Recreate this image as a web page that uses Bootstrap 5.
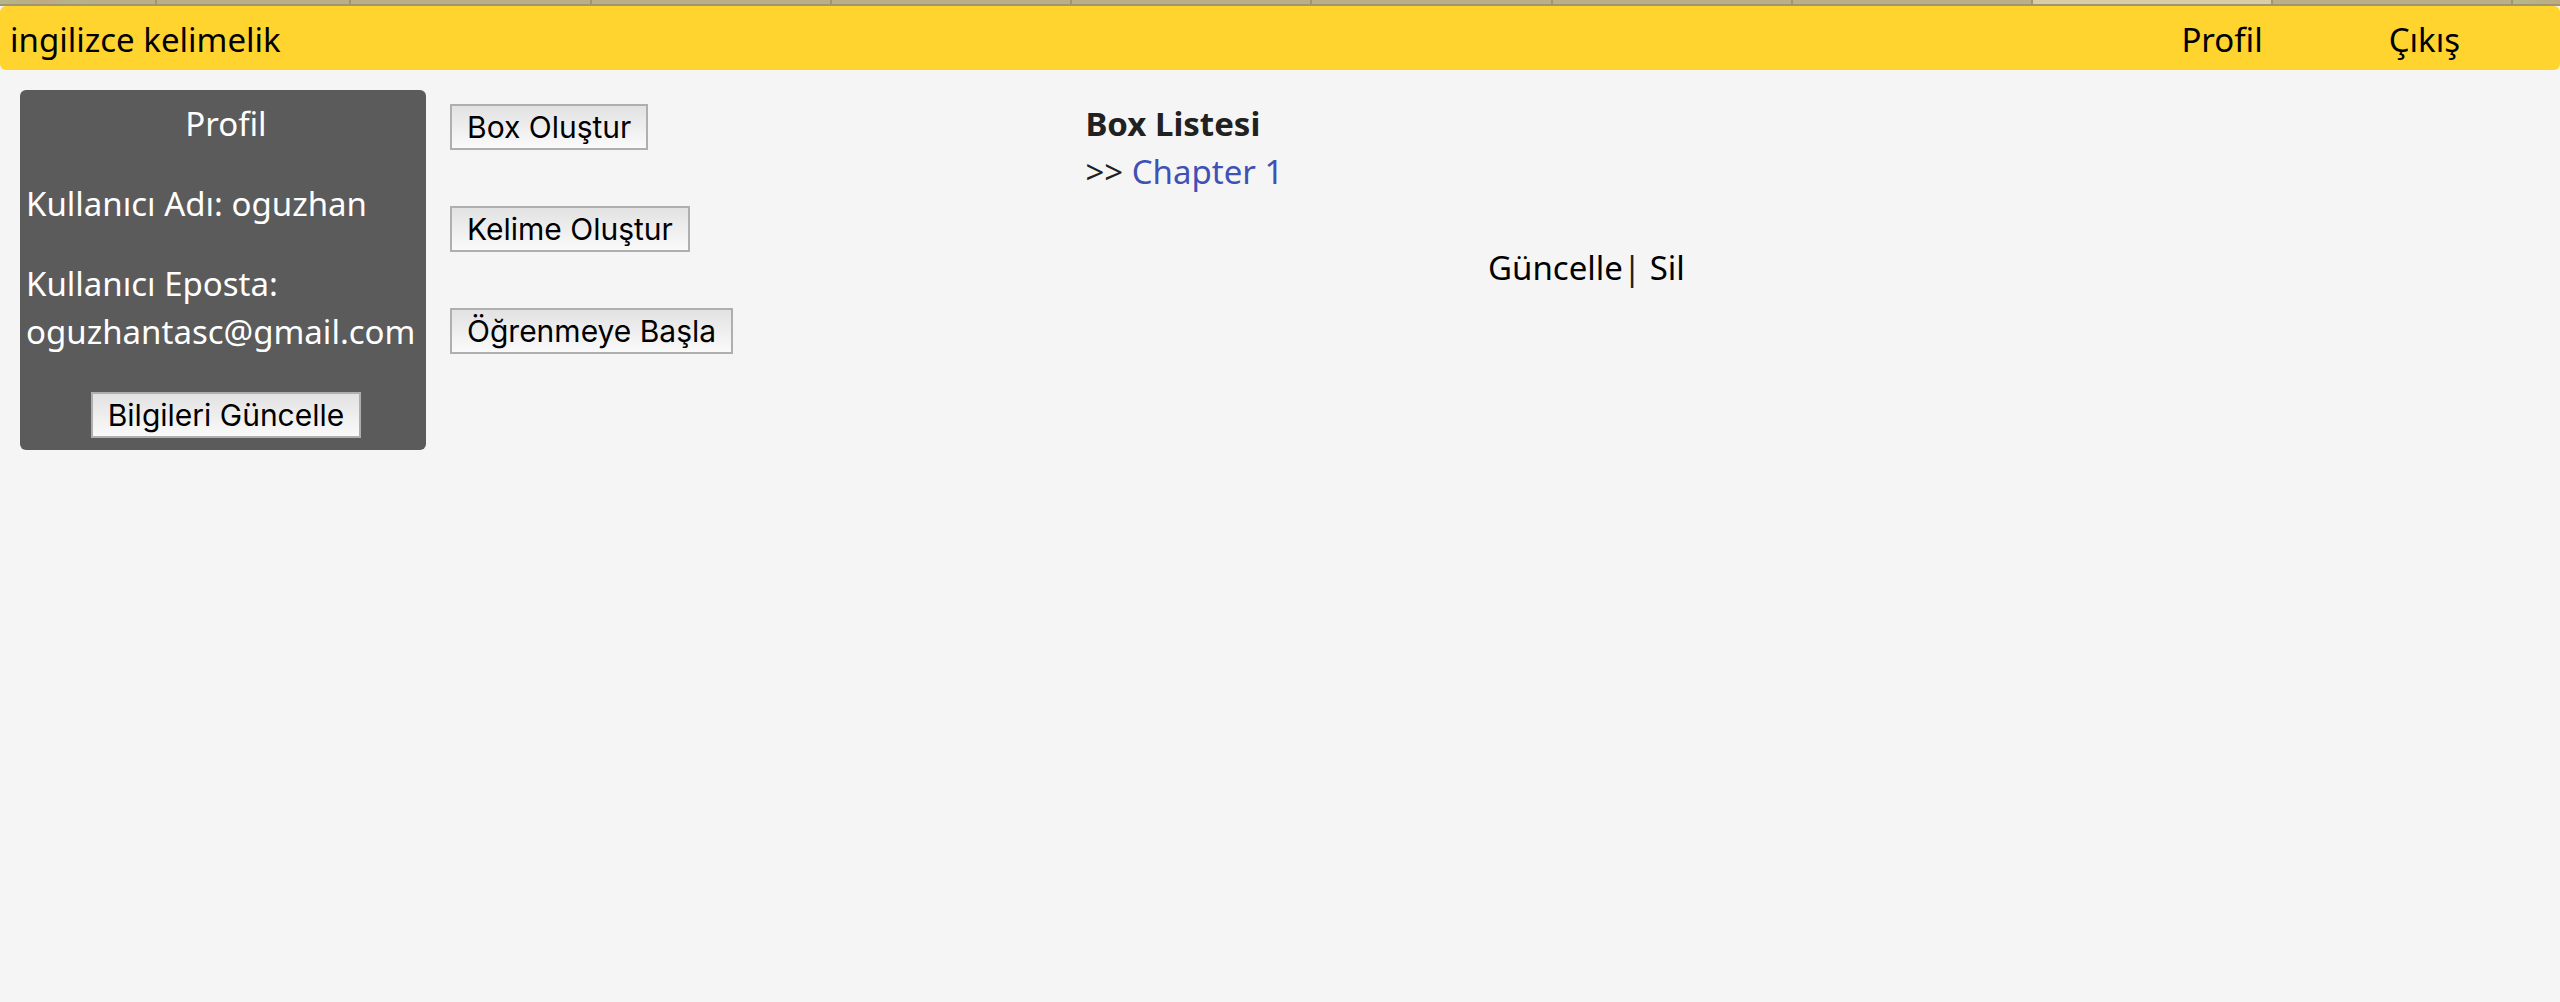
<!DOCTYPE html>
<html lang="tr">
<head>
<meta charset="utf-8">
<meta name="viewport" content="width=device-width, initial-scale=1">
<title>ingilizce kelimelik</title>
<link rel="stylesheet" href="https://cdn.jsdelivr.net/npm/bootstrap@5.3.0/dist/css/bootstrap.min.css">
<style>
body{background:#f5f5f5;color:#212121;font-family:"Noto Sans",sans-serif;font-size:33px;line-height:48px}
.tab-strip{height:6px;background:#bbae88;border-bottom:2px solid #a2946b}
.tab-strip span{flex:240 1 0;border-right:2px solid #a2946b}
.tab-strip .tab-first{flex-grow:156;background:linear-gradient(90deg,#b4b68b,#bfa984 30%,#b4b48b 48%,#bbae88 60%)}
.tab-strip .tab-second{flex-grow:194}
.tab-strip .tab-last{flex-grow:47;border-right:0;background:linear-gradient(90deg,#b4b88a,#bfa984)}
.tab-strip .tab-active{background:#d9cda8}
.topbar{background:#ffd42f;border-radius:6px;min-height:64px;padding:4px 100px 0 10px}
.topbar a{color:#000;text-decoration:none}
.top-links{gap:126px}
.profile-panel{width:406px;margin:20px 24px 0 20px;padding:10px 0 12px 6px;background:#5b5b5b;color:#fff;border-radius:6px}
.profile-panel p{margin:0 0 32px}
.profile-panel .profile-mail{margin-bottom:36px}
.btn-plain{height:46px;padding:0 15px;border:2px solid #afafaf;border-radius:0;background:linear-gradient(#e2e2e2,#fafafa);color:#000;font:30px/40px Inter,sans-serif;white-space:nowrap}
.content-grid{display:grid;grid-template-columns:53fr 50fr 73fr}
.action-list{gap:56px;padding-top:34px}
.box-list{padding-top:30px}
.box-list h2{font-size:inherit;line-height:inherit;font-weight:700;margin:0}
.box-link{color:#3f51b5;text-decoration:none}
.box-tools{margin-top:48px}
.box-tools a{color:#000;text-decoration:none}
</style>
<script src="https://cdn.jsdelivr.net/npm/bootstrap@5.3.0/dist/js/bootstrap.bundle.min.js"></script>
</head>
<body>
<div class="tab-strip d-flex" aria-hidden="true">
<span class="tab-first"></span><span class="tab-second"></span><span></span><span></span><span></span><span></span><span></span><span></span><span></span><span class="tab-active"></span><span></span><span class="tab-last"></span>
</div>
<nav class="topbar d-flex align-items-center justify-content-between">
<a href="#">ingilizce kelimelik</a>
<div class="top-links d-flex"><a href="#">Profil</a><a href="#">Çıkış</a></div>
</nav>
<div class="d-flex align-items-start">
<aside class="profile-panel flex-shrink-0">
<p class="text-center">Profil</p>
<p>Kullanıcı Adı: oguzhan</p>
<p class="profile-mail">Kullanıcı Eposta: oguzhantasc@gmail.com</p>
<div class="d-flex justify-content-center"><button type="button" class="btn-plain">Bilgileri Güncelle</button></div>
</aside>
<main class="content-grid flex-grow-1">
<div class="action-list d-flex flex-column align-items-start">
<button type="button" class="btn-plain">Box Oluştur</button>
<button type="button" class="btn-plain">Kelime Oluştur</button>
<button type="button" class="btn-plain">Öğrenmeye Başla</button>
</div>
<section class="box-list">
<h2>Box Listesi</h2>
<div>&gt;&gt; <a class="box-link" href="#">Chapter 1</a></div>
<div class="box-tools text-end"><a href="#">Güncelle</a>| <a href="#">Sil</a></div>
</section>
</main>
</div>
</body>
</html>
